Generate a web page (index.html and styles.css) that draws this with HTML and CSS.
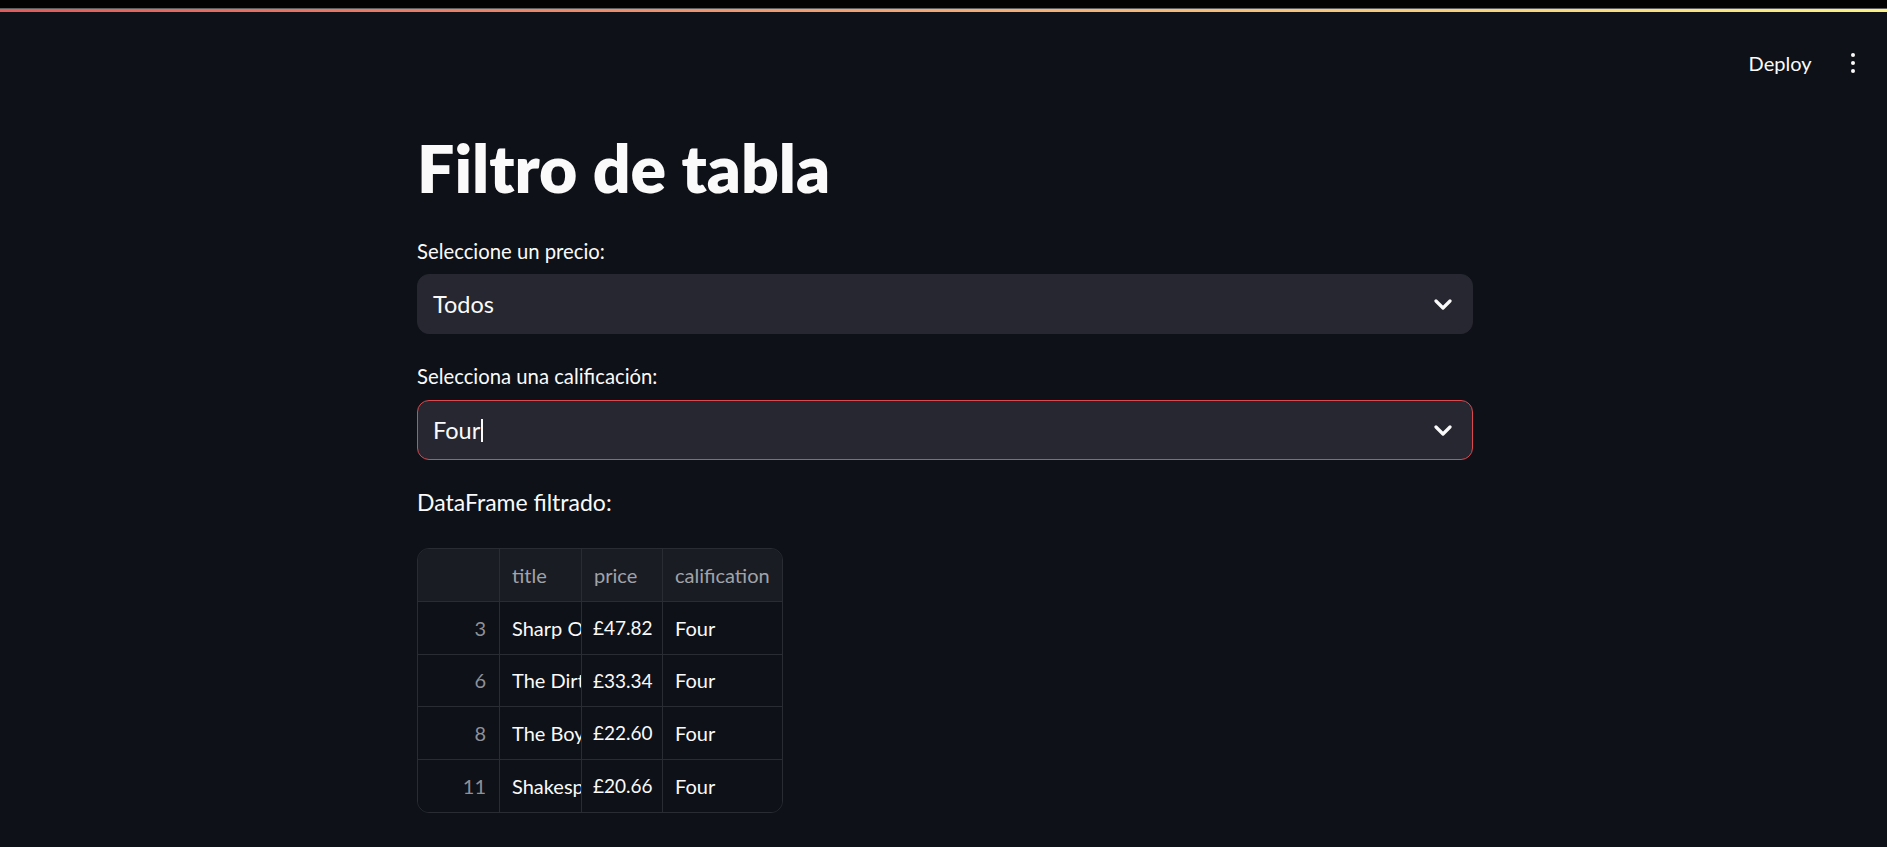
FILE: index.html
```html
<!DOCTYPE html>
<html lang="es">
<head>
<meta charset="utf-8">
<title>Filtro de tabla</title>
<link rel="stylesheet" href="styles.css">
</head>
<body>
<div class="chrome"></div>
<div class="decoration"></div>
<header class="header">
  <span class="deploy">Deploy</span>
  <span class="kebab"><i></i><i></i><i></i></span>
</header>
<main class="main">
  <h1 class="title">Filtro de tabla</h1>
  <label class="label label-first">Seleccione un precio:</label>
  <div class="select">
    <span class="value">Todos</span>
    <svg class="chev" width="18" height="11" viewBox="0 0 18 11"><polyline points="2,2 9,9 16,2" fill="none" stroke="#fafafa" stroke-width="3.2" stroke-linecap="round" stroke-linejoin="round"/></svg>
  </div>
  <label class="label label-second">Selecciona una calificación:</label>
  <div class="select select-focus">
    <span class="value">Four<span class="caret"></span></span>
    <svg class="chev" width="18" height="11" viewBox="0 0 18 11"><polyline points="2,2 9,9 16,2" fill="none" stroke="#fafafa" stroke-width="3.2" stroke-linecap="round" stroke-linejoin="round"/></svg>
  </div>
  <p class="subtitle">DataFrame filtrado:</p>
  <div class="grid">
    <div class="cell head"></div>
    <div class="cell head">title</div>
    <div class="cell head">price</div>
    <div class="cell head last">calification</div>

    <div class="cell idx">3</div>
    <div class="cell"><span class="clip">Sharp Objects</span></div>
    <div class="cell price">£47.82</div>
    <div class="cell last">Four</div>

    <div class="cell idx">6</div>
    <div class="cell"><span class="clip">The Dirty Little Secrets</span></div>
    <div class="cell price">£33.34</div>
    <div class="cell last">Four</div>

    <div class="cell idx">8</div>
    <div class="cell"><span class="clip">The Boys in the Boat</span></div>
    <div class="cell price">£22.60</div>
    <div class="cell last">Four</div>

    <div class="cell idx bottom">11</div>
    <div class="cell bottom"><span class="clip">Shakespeare's Sonnets</span></div>
    <div class="cell price bottom">£20.66</div>
    <div class="cell last bottom">Four</div>
  </div>
</main>
</body>
</html>
```

FILE: styles.css
```css
html, body {
  margin: 0;
  padding: 0;
  background: #0e1117;
  color: #fafafa;
  font-family: Lato, "Noto Sans", sans-serif;
  overflow: hidden;
}

.chrome {
  height: 8px;
  background: #030303;
  border-bottom: 1px solid #5d5d5d;
}

.decoration {
  height: 3px;
  background: linear-gradient(90deg, #e35a5a 0%, #f3a874 50%, #fbf282 100%);
}

.header {
  height: 102px;
  display: flex;
  align-items: center;
  justify-content: flex-end;
  padding-right: 32px;
  box-sizing: border-box;
}

.deploy {
  font-size: 20px;
  color: #fafafa;
  margin-right: 39px;
}

.kebab {
  display: flex;
  flex-direction: column;
  gap: 3.5px;
  align-items: center;
}

.kebab i {
  display: block;
  width: 4.5px;
  height: 4.5px;
  border-radius: 50%;
  background: #fafafa;
}

.main {
  width: 1056px;
  margin-left: 417px;
  display: flex;
  flex-direction: column;
}

.title {
  margin: 14px 0 0 0;
  height: 80px;
  line-height: 80px;
  font-size: 66px;
  font-weight: 800;
  letter-spacing: 0;
}

.label {
  display: block;
  height: 32px;
  line-height: 32px;
  font-size: 20.3px;
  margin-bottom: 7px;
}

.label-first { margin-top: 27px; }
.label-second { margin-top: 26px; margin-bottom: 8px; }

.select {
  height: 60px;
  background: #262730;
  border-radius: 12px;
  border: 1px solid #262730;
  box-sizing: border-box;
  display: flex;
  align-items: center;
  justify-content: space-between;
  padding: 0 20px 0 15px;
}

.select-focus {
  border-color: #d9494f;
}

.value {
  font-size: 23.5px;
  display: flex;
  align-items: center;
}

.caret {
  display: inline-block;
  width: 2px;
  height: 23px;
  background: #fafafa;
  margin-left: 1px;
}

.subtitle {
  margin: 24px 0 0 0;
  height: 36px;
  line-height: 36px;
  font-size: 23px;
}

.grid {
  margin-top: 28px;
  display: grid;
  grid-template-columns: 82px 82px 81px 120px;
  grid-template-rows: 53px repeat(4, 52.5px);
  width: 366px;
  border: 1px solid #2a2c34;
  border-radius: 12px;
  overflow: hidden;
  box-sizing: border-box;
}

.cell {
  border-right: 1px solid #2a2c34;
  border-bottom: 1px solid #2a2c34;
  font-size: 20px;
  color: #fafafa;
  padding: 0 0 0 12px;
  display: flex;
  align-items: center;
  white-space: nowrap;
  overflow: hidden;
  box-sizing: border-box;
  background: #0e1117;
  min-width: 0;
}

.clip {
  display: block;
  width: 100%;
  overflow: hidden;
  white-space: nowrap;
}

.cell.price {
  font-size: 19px;
  padding-left: 11px;
}

.cell.head {
  background: #1a1c23;
  color: #a1a3aa;
}

.cell.idx {
  justify-content: flex-end;
  padding: 0 13px 0 0;
  color: #8e9097;
}

.cell.last { border-right: none; }
.cell.bottom { border-bottom: none; }
```
